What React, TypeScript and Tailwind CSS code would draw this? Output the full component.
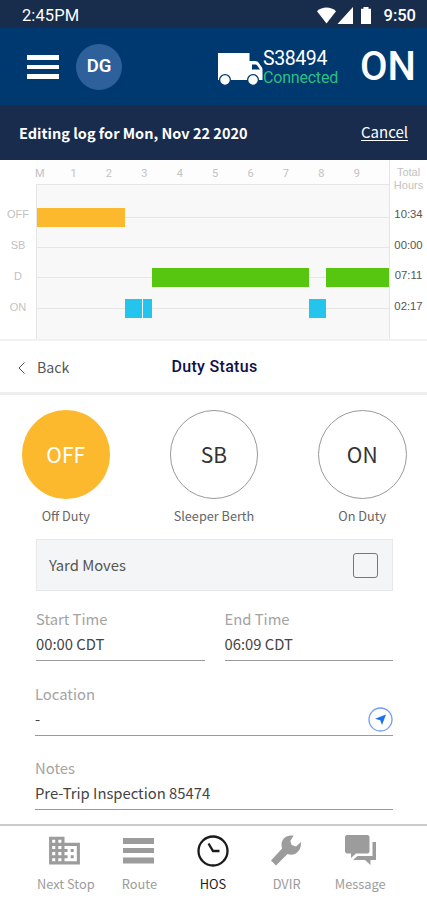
import React from 'react';
import clsx from 'clsx';
import { MdBusiness } from 'react-icons/md';

interface Segment {
  offset: number;
  width: number;
}

interface Lane {
  label: string;
  total: string;
  color: string;
  segments: Segment[];
}

const HOURS = ['M', '1', '2', '3', '4', '5', '6', '7', '8', '9'];

const LANES: Lane[] = [
  { label: 'OFF', total: '10:34', color: 'bg-[#fdb92e]', segments: [{ offset: 0, width: 88 }] },
  { label: 'SB', total: '00:00', color: 'bg-gray-400', segments: [] },
  { label: 'D', total: '07:11', color: 'bg-[#57c610]', segments: [{ offset: 115, width: 157 }, { offset: 17, width: 63 }] },
  { label: 'ON', total: '02:17', color: 'bg-[#25c4ec]', segments: [{ offset: 88, width: 17 }, { offset: 1, width: 9 }, { offset: 157, width: 17 }] },
];

const STATUSES = [
  { code: 'OFF', label: 'Off Duty', active: true },
  { code: 'SB', label: 'Sleeper Berth', active: false },
  { code: 'ON', label: 'On Duty', active: false },
];

const StatusBar: React.FC = () => (
  <div className="flex h-7 items-center bg-[#182c4b] pl-[22px] pr-[11px] pt-1 font-['Roboto'] text-white">
    <span className="text-[16.5px] leading-6 tracking-[0.1px]">2:45PM</span>
    <svg className="ml-auto h-[18px] w-[56px]" viewBox="0 0 56 18" fill="currentColor">
      <path d="M0 4.2C5-.8 14-.8 19 4.2L9.500 16.500z" />
      <path d="M36 0v17H20.500z" />
      <path d="M46.500 0h5v1.800h2.500V17H44V1.800h2.500z" />
    </svg>
    <span className="ml-[11px] text-[16.5px] font-medium leading-6">9:50</span>
  </div>
);

const TruckIcon: React.FC = () => (
  <svg className="mt-[5px] h-[35px] w-[46px] text-white" viewBox="0 0 46 35" fill="currentColor">
    <path fillRule="evenodd" d="M1 1h31.500v8H38c2 0 3 .8 4 2.200l2.600 3.800c.6.9.9 1.500.9 2.500V28H1zM35 12.500v5h8l-3-4.200c-.4-.5-.8-.8-1.500-.8z" />
    <circle cx="8" cy="28" r="5.400" stroke="#003870" strokeWidth="1.300" />
    <circle cx="36" cy="28" r="5.400" stroke="#003870" strokeWidth="1.300" />
  </svg>
);

const Header: React.FC = () => (
  <header className="flex h-[77px] items-center bg-[#003870] pl-[27px] pr-[11px] font-['Roboto'] text-white">
    <button className="mt-px flex w-8 flex-col gap-[5px]">
      <span className="h-[4.67px] bg-white" />
      <span className="h-[4.67px] bg-white" />
      <span className="h-[4.67px] bg-white" />
    </button>
    <div className="ml-[17px] flex size-[46px] items-center justify-center rounded-full bg-[#2e609c] text-[18.5px] font-semibold">DG</div>
    <div className="ml-auto flex items-center">
      <TruckIcon />
      <div className="mt-[2px] flex w-[88px] flex-col">
        <span className="text-[19.5px] leading-[19px] tracking-[-0.4px]">S38494</span>
        <span className="text-[16px] leading-[19px] tracking-[-0.2px] text-[#2fbe82]">Connected</span>
      </div>
      <span className="ml-[9px] w-[56px] text-right text-[40px] font-medium leading-none">ON</span>
    </div>
  </header>
);

const DutyChart: React.FC = () => (
  <section className="flex h-[181px] border-b-2 border-[#f1f1f1] bg-white font-['Liberation_Sans'] text-[11px] text-[#c2c2c2]">
    <div className="flex w-[36px] flex-col pt-[39px]">
      {LANES.map((lane) => (
        <span key={lane.label} className="h-[31px] text-center leading-[31px]">{lane.label}</span>
      ))}
    </div>
    <div className="flex w-[354px] flex-col border-r border-[#e6e6e6] bg-[#f8f8f8]">
      <div className="flex h-6 bg-[#fdfdfd]">
        {HOURS.map((hour) => (
          <span key={hour} className="w-[35.5px] pt-[2px] text-left font-['Roboto'] leading-6 first:-ml-px">{hour}</span>
        ))}
      </div>
      <div className="flex flex-1 flex-col border-l border-t border-[#e6e6e6] pt-[17px]">
        {LANES.map((lane) => (
          <div key={lane.label} className="flex h-[30.3px] items-center bg-[linear-gradient(#e6e6e6,#e6e6e6)] bg-[length:100%_1px] bg-center bg-no-repeat">
            {lane.segments.map((segment, index) => (
              <span key={index} className={clsx('h-[19px] shrink-0', lane.color)} style={{ marginLeft: segment.offset, width: segment.width }} />
            ))}
          </div>
        ))}
      </div>
    </div>
    <div className="flex flex-1 flex-col items-center pt-[6px]">
      <span className="h-[33px] text-center leading-[13px]">Total<br />Hours</span>
      {LANES.map((lane) => (
        <span key={lane.label} className="h-[30.7px] text-[11.3px] leading-[31px] text-[#555]">{lane.total}</span>
      ))}
    </div>
  </section>
);

const StatusPicker: React.FC = () => (
  <div className="flex justify-between pl-[21.5px] pr-[20.5px] pt-[15px]">
    {STATUSES.map((status) => (
      <div key={status.code} className="flex w-[88.5px] flex-col items-center">
        <div className={clsx('flex size-[88.5px] items-center justify-center rounded-full text-[21px]', status.active ? 'bg-[#fdb92e] text-white' : 'border border-[#999] text-[#333]')}>
          {status.code}
        </div>
        <span className="mt-[7px] whitespace-nowrap text-[12.7px] leading-5 text-[#666]">{status.label}</span>
      </div>
    ))}
  </div>
);

const Field: React.FC<{ label: string; value: string; children?: React.ReactNode }> = ({ label, value, children }) => (
  <div className="flex-1 border-b border-[#999]">
    <div className="text-[14.8px] leading-[23px] text-[#a3a3a3]">{label}</div>
    <div className="mb-0.5 flex h-7 items-center justify-between text-[14.8px] text-[#444]">
      <span>{value}</span>
      {children}
    </div>
  </div>
);

const NAV_ITEMS = [
  { label: 'Next Stop', icon: <MdBusiness className="-ml-[3px] size-[37px]" />, active: false },
  {
    label: 'Route',
    icon: (
      <svg className="-ml-px h-[26px] w-[31px]" viewBox="0 0 31 26" fill="currentColor">
        <path d="M0 0h31v6H0zM0 10h31v5H0zM0 19.500h31v6H0z" />
      </svg>
    ),
    active: false,
  },
  {
    label: 'HOS',
    icon: (
      <svg className="size-8" viewBox="0 0 32 32" fill="none" stroke="currentColor" strokeWidth="2.300">
        <circle cx="16" cy="16" r="14.500" />
        <path d="M11.500 8.500l4.500 7.500h6.500" />
      </svg>
    ),
    active: true,
  },
  {
    label: 'DVIR',
    icon: (
      <svg className="size-[31px]" viewBox="0 0 31 31" fill="currentColor">
        <path d="M22.500.7C16-.8 10.500 3.500 10.500 9.500c0 1.500.2 2.800.6 3.900L0 25.500l5 5L16.500 19C23.500 21.500 30.500 16.500 30 7l-5 4.500-4.300-1.500L19.300 6z" />
      </svg>
    ),
    active: false,
  },
  {
    label: 'Message',
    icon: (
      <svg className="h-[31px] w-[31px]" viewBox="0 0 31 31" fill="currentColor">
        <path d="M1.500 0h21.500l1.500 1.500V17L23 18.500H11L6 23v-4.500H1.500L0 17V1.500z" />
        <path d="M27.500 7H31v18h-5.500v5L20 25H8l4.500-4h15z" />
      </svg>
    ),
    active: false,
  },
];

const BottomNav: React.FC = () => (
  <nav className="mt-[14px] flex h-[75px] border-t-2 border-[#ccc] bg-white pl-[29px] pr-[30px]">
    {NAV_ITEMS.map((item) => (
      <button key={item.label} className={clsx('flex flex-1 flex-col items-center', item.active ? 'text-[#1a1a1a]' : 'text-[#9c9c9c]')}>
        <span className="flex h-[49px] items-center">{item.icon}</span>
        <span className="whitespace-nowrap text-[12.8px] leading-[18px]">{item.label}</span>
      </button>
    ))}
  </nav>
);

const App: React.FC = () => {
  return (
    <div className="h-[900px] w-[427px] overflow-hidden bg-white font-['Noto_Sans_CJK_SC',sans-serif]">
      <StatusBar />
      <Header />
      <div className="flex h-[55px] items-center justify-between bg-[#1a2c4d] pl-[19px] pr-[19px] text-white">
        <span className="text-[14.5px] font-bold">Editing log for Mon, Nov 22 2020</span>
        <button className="text-[15px] underline underline-offset-2">Cancel</button>
      </div>
      <DutyChart />
      <div className="grid h-[54px] grid-cols-[1fr_auto_1fr] items-center border-b-[3px] border-[#eee]">
        <button className="flex items-center gap-3 pl-[18px] pt-[3px] text-[14.2px] text-[#555]">
          <svg className="h-[12px] w-[7px]" viewBox="0 0 7 12" fill="none" stroke="currentColor">
            <path d="M6.500.5L1 6l5.500 5.500" />
          </svg>
          Back
        </button>
        <h1 className="pl-[2px] font-['Roboto'] text-[16px] font-medium tracking-[0.3px] text-[#10104a]">Duty Status</h1>
      </div>
      <StatusPicker />
      <div className="pl-9 pr-[34px]">
        <div className="mt-[13.5px] flex h-[52px] items-center justify-between border border-[#e6e8e9] bg-[#f3f5f6] pl-3 pr-[14px]">
          <span className="text-[14.8px] text-[#555]">Yard Moves</span>
          <span className="size-[25px] rounded-[3px] border-[1.5px] border-[#777]" />
        </div>
        <div className="mt-4 flex gap-5">
          <Field label="Start Time" value="00:00 CDT" />
          <Field label="End Time" value="06:09 CDT" />
        </div>
        <div className="-ml-px mt-[21px] flex">
          <Field label="Location" value="-">
            <svg className="size-[25px]" viewBox="0 0 25 25">
              <circle cx="12.500" cy="12.500" r="11.500" fill="none" stroke="#6f9cf5" strokeWidth="1.300" />
              <path d="M18 7.500L14 18l-1.800-4.800L7 11.800z" fill="#1e70f0" />
            </svg>
          </Field>
        </div>
        <div className="-ml-px mt-[20px] flex">
          <Field label="Notes" value="Pre-Trip Inspection 85474" />
        </div>
      </div>
      <BottomNav />
    </div>
  );
};

export default App;
